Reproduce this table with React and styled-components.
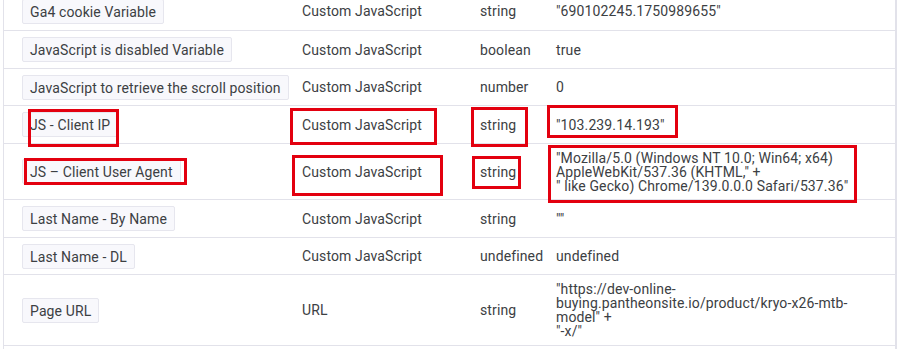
import React from "react";
import styled, { createGlobalStyle } from "styled-components";

const GlobalStyle = createGlobalStyle`
  html, body {
    margin: 0;
    padding: 0;
    background: #ffffff;
  }
  body {
    font-family: Roboto, "Noto Sans", Arial, sans-serif;
    color: #3c4043;
    overflow: hidden;
  }
`;

const Page = styled.div`
  position: relative;
  width: 900px;
  height: 349px;
  overflow: hidden;
`;

const Table = styled.div`
  margin: -8px 0 0 3px;
  width: 891px;
  height: 357px;
  border-left: 1px solid #e2e2ea;
  border-right: 2px solid #e2e2ea;
`;

const Row = styled.div`
  display: grid;
  grid-template-columns: 298px 178px 76px 1fr;
  align-items: center;
  min-height: ${(p) => p.$height || 37}px;
  border-bottom: 1px solid #e2e2ea;
  font-size: 14px;
  letter-spacing: 0.12px;
`;

const NameCell = styled.div`
  padding-left: 18px;
`;

const Cell = styled.div`
  white-space: nowrap;
`;

const ValueCell = styled.div`
  width: 318px;
  line-height: 14px;
  white-space: pre-wrap;
  overflow-wrap: normal;
`;

const Chip = styled.span`
  display: inline-block;
  height: 25px;
  line-height: 24px;
  padding: 0 7px;
  box-sizing: border-box;
  background: #f8f8fc;
  border: 1px solid #e6e6ee;
  border-radius: 2px;
  color: #3c4043;
  white-space: nowrap;
`;

const Highlight = styled.div`
  position: absolute;
  box-sizing: border-box;
  border: 3px solid #e3000f;
  pointer-events: none;
`;

const rows = [
  { name: "Ga4 cookie Variable", type: "Custom JavaScript", kind: "string", value: "\"690102245.1750989655\"", h: 38 },
  { name: "JavaScript is disabled Variable", type: "Custom JavaScript", kind: "boolean", value: "true", h: 37 },
  { name: "JavaScript to retrieve the scroll position", type: "Custom JavaScript", kind: "number", value: "0", h: 36 },
  { name: "JS - Client IP", type: "Custom JavaScript", kind: "string", value: "\"103.239.14.193\"", h: 37 },
  {
    name: "JS \u2013 Client User Agent",
    type: "Custom JavaScript",
    kind: "string",
    value: "\"Mozilla/5.0 (Windows NT 10.0; Win64; x64) AppleWebKit/537.36 (KHTML,\" +\n\" like Gecko) Chrome/139.0.0.0 Safari/537.36\"",
    h: 55,
  },
  { name: "Last Name - By Name", type: "Custom JavaScript", kind: "string", value: "\"\"", h: 37 },
  { name: "Last Name - DL", type: "Custom JavaScript", kind: "undefined", value: "undefined", h: 36 },
  {
    name: "Page URL",
    type: "URL",
    kind: "string",
    value: "\"https://dev-online-buying.pantheonsite.io/product/kryo-x26-mtb-model\" +\n\"-x/\"",
    h: 70,
  },
];

// annotation boxes drawn over the screenshot
const marks = [
  { left: 28, top: 109, width: 91, height: 38 },
  { left: 24, top: 158, width: 163, height: 27 },
  { left: 290, top: 108, width: 147, height: 37 },
  { left: 292, top: 155, width: 151, height: 41 },
  { left: 471, top: 107, width: 57, height: 40 },
  { left: 472, top: 156, width: 49, height: 33 },
  { left: 547, top: 105, width: 131, height: 33 },
  { left: 548, top: 145, width: 309, height: 58 },
];

export default function App() {
  return (
    <Page>
      <GlobalStyle />
      <Table>
        {rows.map((r) => (
          <Row key={r.name} $height={r.h}>
            <NameCell>
              <Chip>{r.name}</Chip>
            </NameCell>
            <Cell>{r.type}</Cell>
            <Cell>{r.kind}</Cell>
            <ValueCell>{r.value}</ValueCell>
          </Row>
        ))}
      </Table>
      {marks.map((m, i) => (
        <Highlight
          key={i}
          style={{ left: m.left, top: m.top, width: m.width, height: m.height }}
        />
      ))}
    </Page>
  );
}
